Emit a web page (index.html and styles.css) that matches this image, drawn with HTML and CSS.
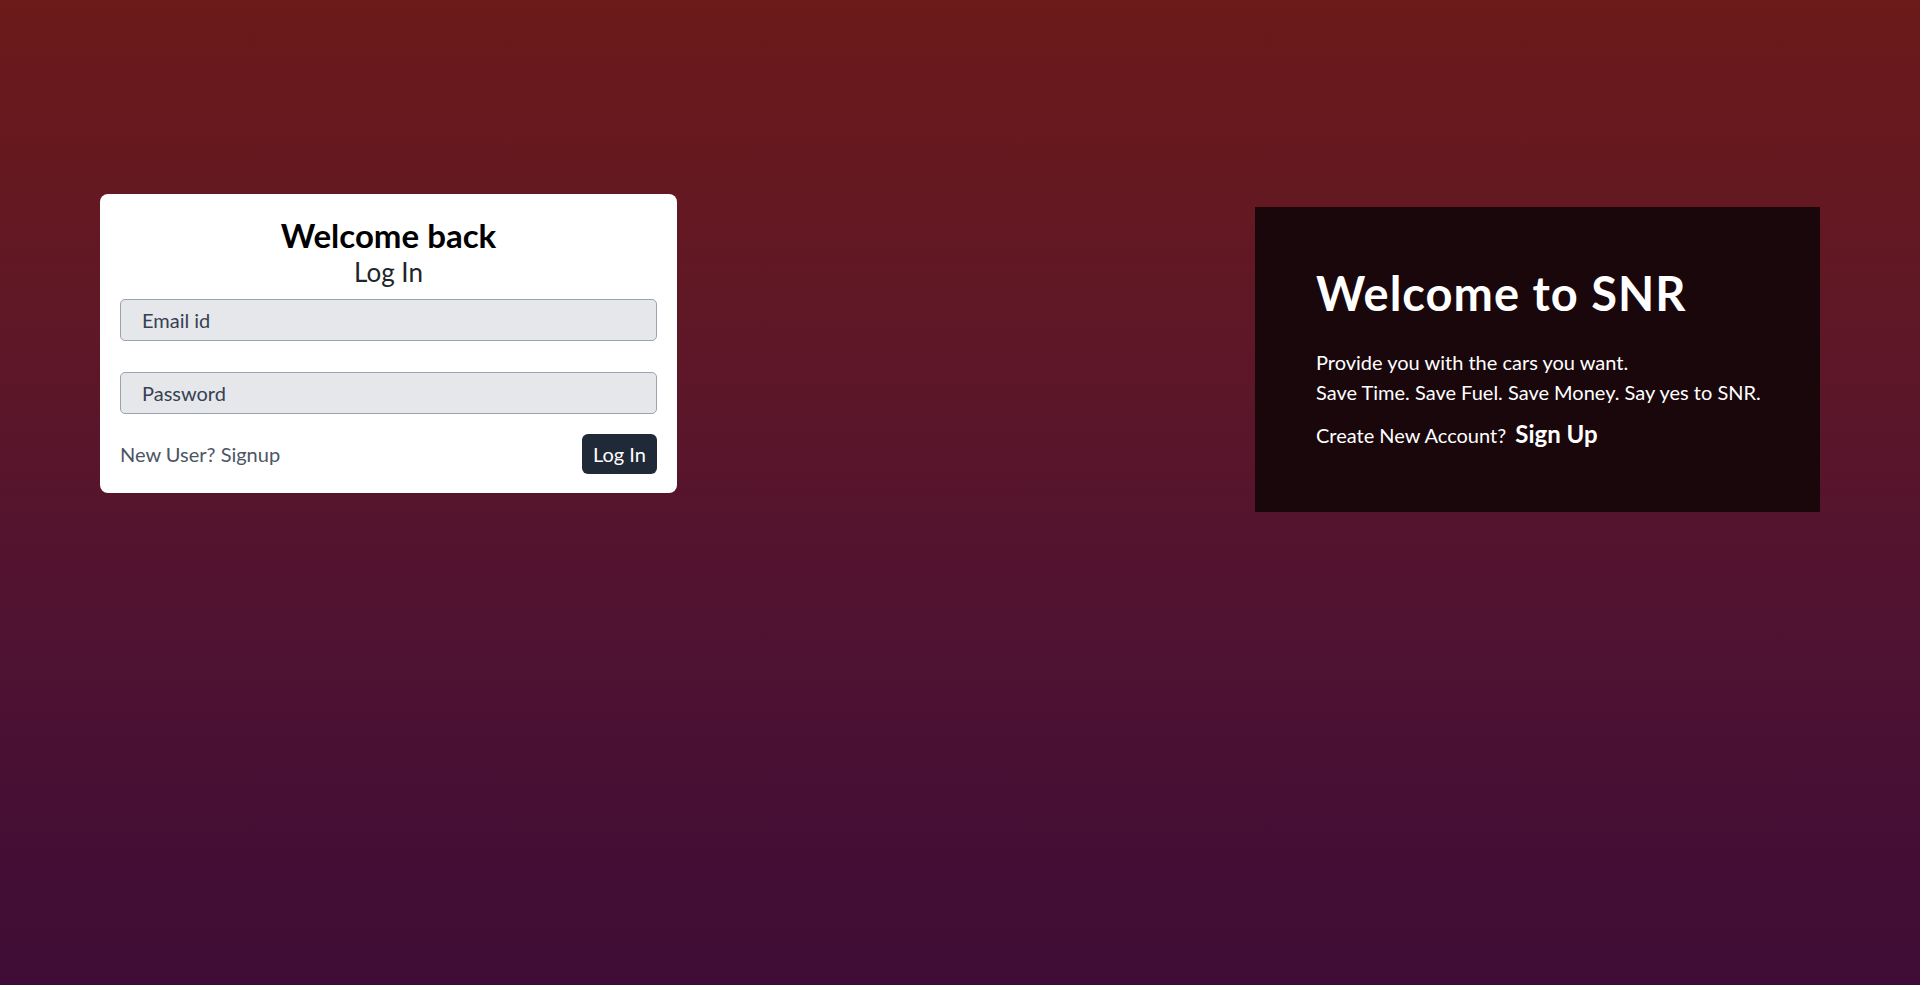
FILE: index.html
```html
<!DOCTYPE html>
<html lang="en">
<head>
<meta charset="utf-8">
<title>SNR - Log In</title>
<link rel="stylesheet" href="styles.css">
</head>
<body>
<main class="page">
  <section class="card">
    <h2 class="card-title">Welcome back</h2>
    <h4 class="card-sub">Log In</h4>
    <form class="form">
      <input class="field" type="email" placeholder="Email id">
      <input class="field field-gap" type="password" placeholder="Password">
      <div class="form-foot">
        <a class="link" href="#">New User? Signup</a>
        <button class="btn" type="button">Log In</button>
      </div>
    </form>
  </section>
  <section class="promo">
    <h1 class="promo-title">Welcome to SNR</h1>
    <p class="promo-text">Provide you with the cars you want.<br>Save Time. Save Fuel. Save Money. Say yes to SNR.</p>
    <p class="promo-cta">Create New Account? <a class="promo-link" href="#">Sign Up</a></p>
  </section>
</main>
</body>
</html>
```

FILE: styles.css
```css
html, body {
  margin: 0;
  padding: 0;
  height: 100%;
}

body {
  font-family: "Lato", "Liberation Sans", sans-serif;
  background: linear-gradient(180deg, #6c1a1a 0%, #5e1727 35%, #4f1232 65%, #3e0c36 100%);
  min-height: 985px;
  color: #212529;
}

.page {
  display: flex;
  justify-content: space-between;
  align-items: flex-start;
  padding: 194px 100px 0;
}

.card {
  width: 577px;
  box-sizing: border-box;
  background: #ffffff;
  border-radius: 8px;
  padding: 22px 20px 19px;
}

.card-title {
  margin: 0;
  text-align: center;
  font-size: 33px;
  font-weight: 700;
  line-height: 38px;
  color: #000;
}

.card-sub {
  margin: 0;
  text-align: center;
  font-size: 26px;
  font-weight: 400;
  line-height: 36px;
  color: #212529;
}

.form {
  margin-top: 9px;
  display: flex;
  flex-direction: column;
}

.field {
  height: 42px;
  box-sizing: border-box;
  border: 1px solid #9ca3af;
  border-radius: 5px;
  background: #e5e7eb;
  padding: 0 21px;
  font-family: inherit;
  font-size: 20px;
  color: #374151;
  outline: none;
}

.field::placeholder {
  color: #374151;
}

.field-gap {
  margin-top: 31px;
}

.form-foot {
  margin-top: 20px;
  display: flex;
  justify-content: space-between;
  align-items: center;
}

.link {
  font-size: 20px;
  color: #4b5563;
  text-decoration: none;
}

.btn {
  height: 40px;
  width: 75px;
  border: none;
  border-radius: 6px;
  background: #1f2937;
  color: #ffffff;
  font-family: inherit;
  font-size: 20px;
  padding: 0;
}

.promo {
  width: 565px;
  height: 305px;
  box-sizing: border-box;
  margin-top: 13px;
  padding: 58px 30px 58px 61px;
  background: #1a070b;
  color: #ffffff;
}

.promo-title {
  margin: 0;
  font-size: 47px;
  font-weight: 700;
  line-height: 56px;
  letter-spacing: 1px;
}

.promo-text {
  margin: 26px 0 0;
  font-size: 20px;
  line-height: 30px;
}

.promo-cta {
  margin: 12px 0 0;
  font-size: 20px;
  line-height: 30px;
}

.promo-link {
  margin-left: 4px;
  font-size: 24px;
  font-weight: 700;
  color: #ffffff;
  text-decoration: none;
}
```
